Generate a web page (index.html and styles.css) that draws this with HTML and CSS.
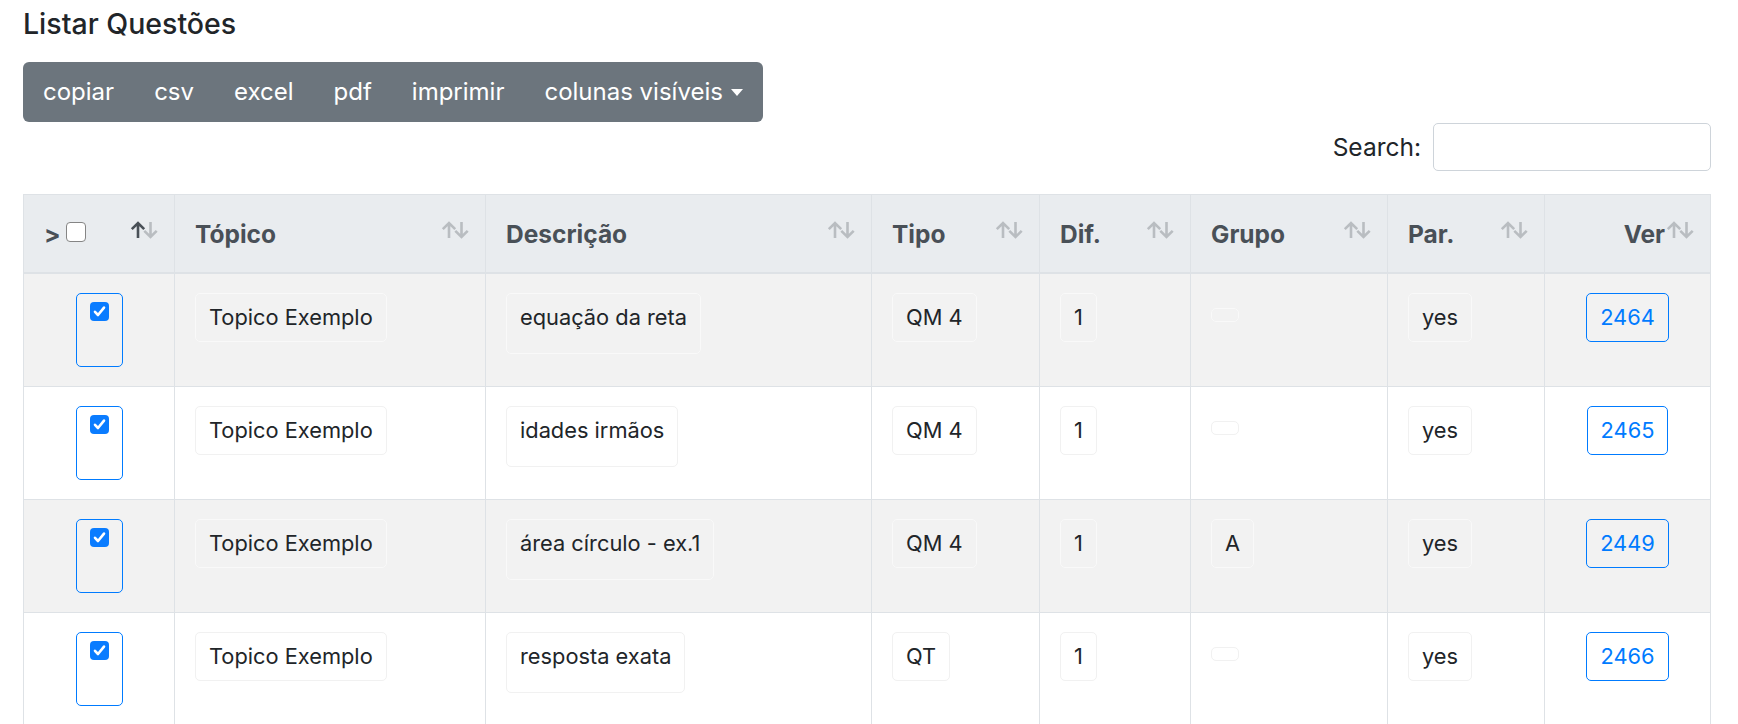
FILE: index.html
```html
<!DOCTYPE html>
<html lang="pt">
<head>
<meta charset="utf-8">
<title>Listar Questões</title>
<link rel="stylesheet" href="styles.css">
</head>
<body>
<div class="page">
  <h5 class="title">Listar Questões</h5>
  <div class="toolbar">
    <button class="tb-btn">copiar</button>
    <button class="tb-btn">csv</button>
    <button class="tb-btn">excel</button>
    <button class="tb-btn">pdf</button>
    <button class="tb-btn">imprimir</button>
    <button class="tb-btn">colunas visíveis<span class="caret"></span></button>
  </div>
  <div class="filter"><label for="q">Search:</label><input id="q" type="search"></div>
  <table class="grid">
    <thead>
      <tr>
        <th class="c1"><span class="gt">&gt;</span> <span class="hcheck"></span>
          <svg class="sort" width="29" height="18" viewBox="0 0 29 18"><path class="on" d="M8 17V2M1.8 8.2L8 2l6.2 6.2"/><path d="M20.5 1v15M14.3 9.8l6.2 6.2 6.2-6.2"/></svg></th>
        <th class="c2">Tópico<svg class="sort" width="29" height="18" viewBox="0 0 29 18"><path d="M8 17V2M1.8 8.2L8 2l6.2 6.2"/><path d="M20.5 1v15M14.3 9.8l6.2 6.2 6.2-6.2"/></svg></th>
        <th class="c3">Descrição<svg class="sort" width="29" height="18" viewBox="0 0 29 18"><path d="M8 17V2M1.8 8.2L8 2l6.2 6.2"/><path d="M20.5 1v15M14.3 9.8l6.2 6.2 6.2-6.2"/></svg></th>
        <th class="c4">Tipo<svg class="sort" width="29" height="18" viewBox="0 0 29 18"><path d="M8 17V2M1.8 8.2L8 2l6.2 6.2"/><path d="M20.5 1v15M14.3 9.8l6.2 6.2 6.2-6.2"/></svg></th>
        <th class="c5">Dif.<svg class="sort" width="29" height="18" viewBox="0 0 29 18"><path d="M8 17V2M1.8 8.2L8 2l6.2 6.2"/><path d="M20.5 1v15M14.3 9.8l6.2 6.2 6.2-6.2"/></svg></th>
        <th class="c6">Grupo<svg class="sort" width="29" height="18" viewBox="0 0 29 18"><path d="M8 17V2M1.8 8.2L8 2l6.2 6.2"/><path d="M20.5 1v15M14.3 9.8l6.2 6.2 6.2-6.2"/></svg></th>
        <th class="c7">Par.<svg class="sort" width="29" height="18" viewBox="0 0 29 18"><path d="M8 17V2M1.8 8.2L8 2l6.2 6.2"/><path d="M20.5 1v15M14.3 9.8l6.2 6.2 6.2-6.2"/></svg></th>
        <th class="c8 right">Ver<svg class="sort" width="29" height="18" viewBox="0 0 29 18"><path d="M8 17V2M1.8 8.2L8 2l6.2 6.2"/><path d="M20.5 1v15M14.3 9.8l6.2 6.2 6.2-6.2"/></svg></th>
      </tr>
    </thead>
    <tbody>
      <tr>
        <td class="center"><span class="selbox"><span class="cb"><svg width="19" height="19" viewBox="0 0 19 19"><path d="M5 9.8l3 3.2 6-7.4"/></svg></span></span></td>
        <td><span class="pill">Topico Exemplo</span></td>
        <td><span class="pill desc">equação da reta</span></td>
        <td><span class="pill">QM 4</span></td>
        <td><span class="pill">1</span></td>
        <td><span class="pill empty"></span></td>
        <td><span class="pill">yes</span></td>
        <td class="center"><a class="pill link">2464</a></td>
      </tr>
      <tr>
        <td class="center"><span class="selbox"><span class="cb"><svg width="19" height="19" viewBox="0 0 19 19"><path d="M5 9.8l3 3.2 6-7.4"/></svg></span></span></td>
        <td><span class="pill">Topico Exemplo</span></td>
        <td><span class="pill desc">idades irmãos</span></td>
        <td><span class="pill">QM 4</span></td>
        <td><span class="pill">1</span></td>
        <td><span class="pill empty"></span></td>
        <td><span class="pill">yes</span></td>
        <td class="center"><a class="pill link">2465</a></td>
      </tr>
      <tr>
        <td class="center"><span class="selbox"><span class="cb"><svg width="19" height="19" viewBox="0 0 19 19"><path d="M5 9.8l3 3.2 6-7.4"/></svg></span></span></td>
        <td><span class="pill">Topico Exemplo</span></td>
        <td><span class="pill desc">área círculo - ex.1</span></td>
        <td><span class="pill">QM 4</span></td>
        <td><span class="pill">1</span></td>
        <td><span class="pill">A</span></td>
        <td><span class="pill">yes</span></td>
        <td class="center"><a class="pill link">2449</a></td>
      </tr>
      <tr>
        <td class="center"><span class="selbox"><span class="cb"><svg width="19" height="19" viewBox="0 0 19 19"><path d="M5 9.8l3 3.2 6-7.4"/></svg></span></span></td>
        <td><span class="pill">Topico Exemplo</span></td>
        <td><span class="pill desc">resposta exata</span></td>
        <td><span class="pill">QT</span></td>
        <td><span class="pill">1</span></td>
        <td><span class="pill empty"></span></td>
        <td><span class="pill">yes</span></td>
        <td class="center"><a class="pill link">2466</a></td>
      </tr>
    </tbody>
  </table>
</div>
</body>
</html>
```

FILE: styles.css
```css
* { box-sizing: border-box; }
body {
  margin: 0;
  font-family: Inter, "Noto Sans", sans-serif;
  color: #212529;
  background: #fff;
}
.page { padding: 6px 27px 0 23px; }
.title {
  margin: 0;
  font-size: 28.5px;
  font-weight: 500;
  line-height: 36px;
}
.toolbar {
  display: inline-flex;
  margin-top: 20px;
  height: 60px;
  background: #6c757d;
  border-radius: 6px;
}
.tb-btn {
  font: inherit;
  font-size: 24px;
  line-height: 60px;
  color: #fff;
  background: transparent;
  border: 0;
  padding: 0 20px;
}
.caret {
  display: inline-block;
  margin-left: 8px;
  vertical-align: 4px;
  border-top: 7px solid #fff;
  border-left: 6.5px solid transparent;
  border-right: 6.5px solid transparent;
}
.filter {
  display: flex;
  justify-content: flex-end;
  align-items: center;
  gap: 12px;
  margin-top: 1px;
  font-size: 24.5px;
}
.filter input {
  width: 278px;
  height: 48px;
  border: 1px solid #ced4da;
  border-radius: 5px;
}
.grid {
  margin-top: 23px;
  width: 1688px;
  table-layout: fixed;
  border-collapse: separate;
  border-spacing: 0;
}
.grid th {
  position: relative;
  background: #e9ecef;
  color: #495057;
  font-weight: 700;
  font-size: 24.5px;
  line-height: 36px;
  text-align: left;
  white-space: nowrap;
  padding: 21px 45px 20px 20px;
  border-top: 1px solid #dee2e6;
  border-right: 1px solid #dee2e6;
  border-bottom: 2px solid #dee2e6;
}
.grid th.right { text-align: right; }
.grid th:first-child, .grid td:first-child { border-left: 1px solid #dee2e6; }
.c1 { width: 152px; }
.c2 { width: 311px; }
.c3 { width: 386px; }
.c4 { width: 168px; }
.c5 { width: 151px; }
.c6 { width: 197px; }
.c7 { width: 157px; }
.c8 { width: 166px; }
.gt { font-weight: 700; }
.hcheck {
  display: inline-block;
  width: 20px;
  height: 20px;
  vertical-align: 1px;
  background: #fff;
  border: 1.5px solid #858585;
  border-radius: 4px;
}
.sort {
  position: absolute;
  right: 15px;
  top: 26px;
  fill: none;
  stroke: #b9bdc1;
  stroke-width: 2.6;
  stroke-linecap: butt;
  stroke-linejoin: miter;
}
.sort .on { stroke: #495057; }
.grid td {
  vertical-align: top;
  font-size: 21.8px;
  line-height: 49px;
  padding: 19px 19px 19px 20px;
  border-right: 1px solid #dee2e6;
  border-bottom: 1px solid #dee2e6;
  background: #fff;
}
.grid tbody tr:nth-child(odd) td { background: #f2f2f2; }
.grid td.center { text-align: center; padding-left: 0; padding-right: 0; }
.selbox {
  display: block;
  width: 47px;
  height: 74px;
  margin: 0 auto;
  padding-top: 8px;
  border: 1px solid #007bff;
  border-radius: 5px;
}
.cb {
  display: block;
  width: 19px;
  height: 19px;
  margin: 0 auto;
  background: #0a7cff;
  border-radius: 4px;
}
.cb svg {
  display: block;
  fill: none;
  stroke: #fff;
  stroke-width: 2.6;
  stroke-linecap: round;
  stroke-linejoin: round;
}
.pill {
  display: inline-block;
  padding: 6px 13px;
  line-height: 35px;
  border: 1px solid #f6f6f6;
  border-radius: 5px;
  color: #212529;
  white-space: nowrap;
}
.grid tbody tr:nth-child(odd) .pill { border-color: #f9f9f9; }
.grid tbody tr:nth-child(even) .pill { border-color: #f1f1f1; }
.pill.desc { padding-bottom: 18px; }
.pill.empty {
  vertical-align: top;
  margin-top: 15px;
}
.grid tbody tr .pill.link {
  color: #007bff;
  border-color: #007bff;
  text-decoration: none;
}
```
